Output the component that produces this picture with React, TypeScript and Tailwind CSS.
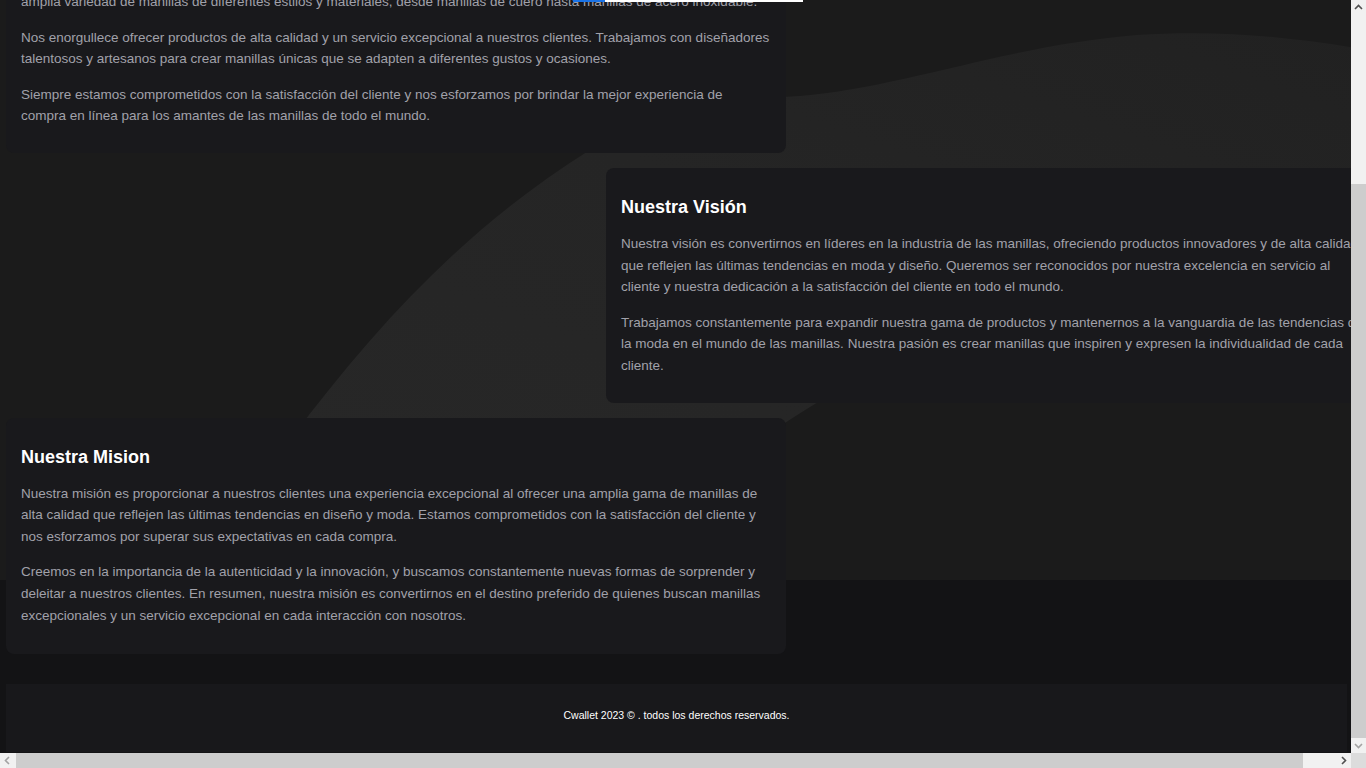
import React from "react";

const body = "text-[13.5px] leading-[21.6px] text-[#a1a1aa]";

function Wave(): React.ReactElement {
  return (
    <div className="absolute top-0 left-0 w-full h-[580px] bg-[#1b1b1b]">
      <svg width="1351" height="580" viewBox="0 0 1351 580" className="block">
        <defs>
          <linearGradient id="band" x1="0" y1="1" x2="1" y2="0">
            <stop offset="0" stopColor="#272727" />
            <stop offset="0.5" stopColor="#252525" />
            <stop offset="1" stopColor="#212121" />
          </linearGradient>
        </defs>
        <path
          d="M 290 440 C 380 320 470 225 590 150 C 680 105 760 98 800 96 C 900 88 1010 45 1137 35 C 1240 28 1320 42 1400 55 L 1400 150 C 1180 230 930 320 760 440 Z"
          fill="url(#band)"
        />
      </svg>
    </div>
  );
}

function Card({
  title,
  paras,
  className,
}: {
  title?: string;
  paras: string[];
  className: string;
}): React.ReactElement {
  return (
    <section className={`w-[780px] shrink-0 rounded-lg bg-[#19191c] px-[15px] ${className}`}>
      {title && (
        <h2 className="text-[18px] leading-[28px] font-bold text-white mb-[12px]">{title}</h2>
      )}
      <div className="space-y-[14px]">
        {paras.map((p, i) => (
          <p key={i} className={body}>
            {p}
          </p>
        ))}
      </div>
    </section>
  );
}

function Chevron({ dir, dark }: { dir: "up" | "down" | "left" | "right"; dark: boolean }): React.ReactElement {
  const pts = {
    up: "4,9 7.5,5.5 11,9",
    down: "4,6 7.5,9.5 11,6",
    left: "9,4 5.5,7.5 9,11",
    right: "6,4 9.5,7.5 6,11",
  }[dir];
  return (
    <svg width="15" height="15" viewBox="0 0 15 15" className="block">
      <polyline points={pts} fill="none" stroke={dark ? "#505050" : "#a3a3a3"} strokeWidth="1.6" />
    </svg>
  );
}

export default function App(): React.ReactElement {
  return (
    <div className="w-[1366px] h-[768px] flex flex-col overflow-hidden bg-[#f1f1f1] font-['Liberation_Sans',Arial,sans-serif]">
      <div className="flex h-[753px]">
        {/* viewport */}
        <div className="relative w-[1351px] h-[753px] overflow-hidden bg-[#131315]">
          <Wave />
          <div className="relative w-[1387px] mt-[-9px] pl-[6px] flex flex-col gap-[15px]">
            <Card
              className="pb-[26px] rounded-t-none"
              paras={[
                "amplia variedad de manillas de diferentes estilos y materiales, desde manillas de cuero hasta manillas de acero inoxidable.",
                "Nos enorgullece ofrecer productos de alta calidad y un servicio excepcional a nuestros clientes. Trabajamos con diseñadores talentosos y artesanos para crear manillas únicas que se adapten a diferentes gustos y ocasiones.",
                "Siempre estamos comprometidos con la satisfacción del cliente y nos esforzamos por brindar la mejor experiencia de compra en línea para los amantes de las manillas de todo el mundo.",
              ]}
            />
            <Card
              className="ml-[600px] pt-[25px] pb-[26px]"
              title="Nuestra Visión"
              paras={[
                "Nuestra visión es convertirnos en líderes en la industria de las manillas, ofreciendo productos innovadores y de alta calidad que reflejen las últimas tendencias en moda y diseño. Queremos ser reconocidos por nuestra excelencia en servicio al cliente y nuestra dedicación a la satisfacción del cliente en todo el mundo.",
                "Trabajamos constantemente para expandir nuestra gama de productos y mantenernos a la vanguardia de las tendencias de la moda en el mundo de las manillas. Nuestra pasión es crear manillas que inspiren y expresen la individualidad de cada cliente.",
              ]}
            />
            <Card
              className="pt-[25px] pb-[28px]"
              title="Nuestra Mision"
              paras={[
                "Nuestra misión es proporcionar a nuestros clientes una experiencia excepcional al ofrecer una amplia gama de manillas de alta calidad que reflejen las últimas tendencias en diseño y moda. Estamos comprometidos con la satisfacción del cliente y nos esforzamos por superar sus expectativas en cada compra.",
                "Creemos en la importancia de la autenticidad y la innovación, y buscamos constantemente nuevas formas de sorprender y deleitar a nuestros clientes. En resumen, nuestra misión es convertirnos en el destino preferido de quienes buscan manillas excepcionales y un servicio excepcional en cada interacción con nosotros.",
              ]}
            />
            <footer className="mt-[15px] w-[1341px] h-[68px] bg-[#18181b] flex items-center justify-center pb-[4px]">
              <p className="text-[10.5px] text-white">Cwallet 2023 © . todos los derechos reservados.</p>
            </footer>
          </div>
          {/* highlight line at the top */}
          <div className="absolute top-0 left-[573px] flex h-[2px]">
            <div className="w-[32px] bg-[#1a73e8]" />
            <div className="w-[198px] bg-white" />
          </div>
        </div>
        {/* vertical scrollbar */}
        <div className="w-[15px] h-[753px] flex flex-col bg-[#f1f1f1]">
          <Chevron dir="up" dark />
          <div className="h-[169px]" />
          <div className="flex-1 bg-[#cdcdcd]" />
          <Chevron dir="down" dark={false} />
        </div>
      </div>
      {/* horizontal scrollbar */}
      <div className="h-[15px] flex bg-[#f1f1f1]">
        <Chevron dir="left" dark={false} />
        <div className="ml-[1px] w-[1287px] bg-[#cdcdcd]" />
        <div className="flex-1" />
        <Chevron dir="right" dark />
        <div className="w-[15px] bg-[#dcdcdc]" />
      </div>
    </div>
  );
}
